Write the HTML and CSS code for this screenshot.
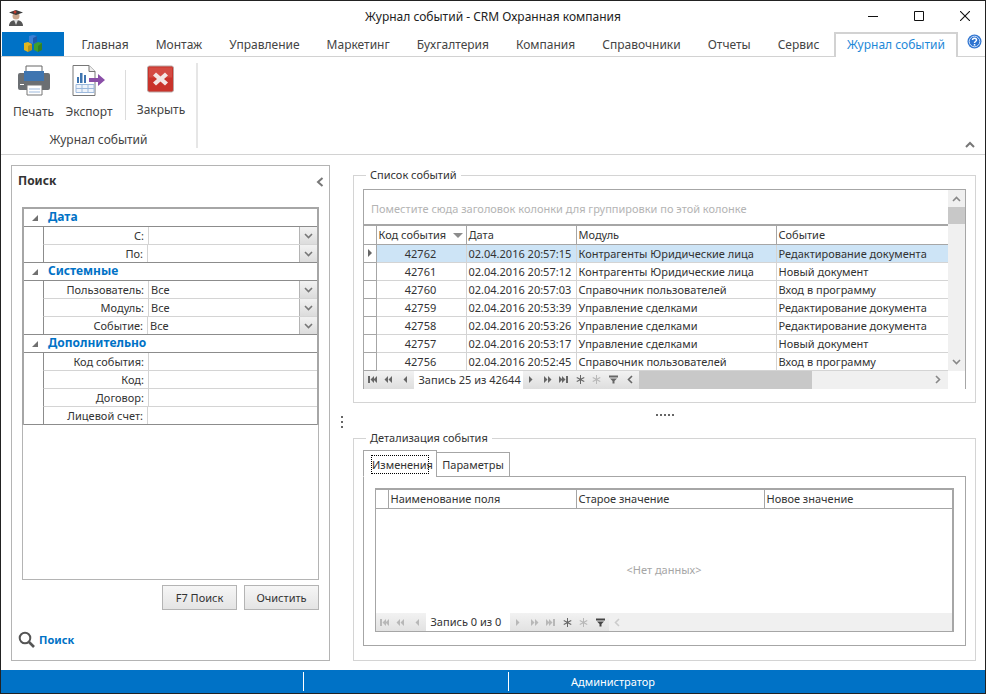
FILE: index.html
```html
<!DOCTYPE html>
<html>
<head>
<meta charset="utf-8">
<title>Журнал событий - CRM Охранная компания</title>
<link rel="stylesheet" href="styles.css">
</head>
<body>
<svg class="defs" width="0" height="0">
  <symbol id="nav-first" viewBox="0 0 9 7"><path d="M0 0h2v7H0zM6 0v7L2.500 3.500zM9 0v7L5.500 3.500z"/></symbol>
  <symbol id="nav-pageprev" viewBox="0 0 9 7"><path d="M4 0v7L.5 3.500zM8 0v7L4.500 3.500z"/></symbol>
  <symbol id="nav-prev" viewBox="0 0 9 7"><path d="M6 0v7L2.500 3.500z"/></symbol>
  <symbol id="nav-next" viewBox="0 0 9 7"><path d="M3 0v7l3.500-3.500z"/></symbol>
  <symbol id="nav-pagenext" viewBox="0 0 9 7"><path d="M1 0v7l3.500-3.500zM5 0v7l3.500-3.500z"/></symbol>
  <symbol id="nav-last" viewBox="0 0 9 7"><path d="M0 0v7l3.500-3.500zM3 0v7l3.500-3.500zM7 0h2v7H7z"/></symbol>
  <symbol id="nav-add" viewBox="0 0 9 9"><path d="M4 0h1v3.500L8 2l.5 1L5.500 4.500 8.500 6 8 7 5 5.500V9H4V5.500L1 7 .5 6l3-1.500-3-1.500L1 2l3 1.500z"/></symbol>
  <symbol id="nav-filter" viewBox="0 0 9 8"><path d="M0 0h9v2H0zM1 3h7L5.500 5.500V8h-2V5.500z"/></symbol>
  <symbol id="chev-down" viewBox="0 0 9 6"><path d="M1 1l3.500 3.500L8 1" fill="none" stroke="currentColor" stroke-width="1.600"/></symbol>
</svg>

<div class="window">
  <div class="titlebar">
    <svg class="app-icon" width="16" height="18" viewBox="0 0 16 18">
      <path d="M1 17c0-4 3-6 7-6s7 2 7 6z" fill="#555"/>
      <path d="M6 11h4l-2 5z" fill="#ddd"/>
      <circle cx="8" cy="7" r="3.500" fill="#c9a58c"/>
      <path d="M1 3.500L8 1l7 2.500L8 6z" fill="#3b3b3b"/>
      <circle cx="7" cy="3" r="1.500" fill="#c0392b"/>
    </svg>
    <div class="title-text">Журнал событий - CRM Охранная компания</div>
    <div class="win-btns">
      <svg width="10" height="10" viewBox="0 0 10 10"><path d="M0 5.500h10" stroke="#111"/></svg>
      <svg width="10" height="10" viewBox="0 0 10 10"><path d="M.5.500h9v9h-9z" fill="none" stroke="#111"/></svg>
      <svg width="10" height="10" viewBox="0 0 10 10"><path d="M0 0l10 10M10 0L0 10" stroke="#111" stroke-width="1.100"/></svg>
    </div>
  </div>

  <div class="tabs">
    <div class="app-tab">
      <svg width="20" height="18" viewBox="0 0 20 18">
        <path d="M6 1l4-1 4 1v6l-4 2-4-2z" fill="#3a7fd5"/>
        <path d="M1 8l4-1 4 2v6l-4 2-4-2z" fill="#e2b720"/>
        <path d="M11 9l4-2 4 1v7l-4 2-4-2z" fill="#3f9e2e"/>
        <path d="M10 3v6l4-2V1z" fill="#1f5aa8"/>
        <path d="M5 11v6l4-2V9zM15 11v6l4-2V8z" fill="#00000030"/>
      </svg>
    </div>
    <div class="tab">Главная</div>
    <div class="tab">Монтаж</div>
    <div class="tab">Управление</div>
    <div class="tab">Маркетинг</div>
    <div class="tab">Бухгалтерия</div>
    <div class="tab">Компания</div>
    <div class="tab">Справочники</div>
    <div class="tab">Отчеты</div>
    <div class="tab">Сервис</div>
    <div class="tab active">Журнал событий</div>
    <svg class="help" width="15" height="15" viewBox="0 0 15 15">
      <circle cx="7.500" cy="7.500" r="7" fill="#2f74d0"/>
      <circle cx="7.500" cy="7.500" r="5.300" fill="none" stroke="#cfe2fa"/>
      <path d="M5.500 6c0-2.500 4-2.500 4 0 0 1.500-2 1.500-2 3" fill="none" stroke="#fff" stroke-width="1.500"/>
      <path d="M6.800 10h1.500v1.500H6.800z" fill="#fff"/>
    </svg>
  </div>

  <div class="ribbon">
    <div class="rgroup">
      <div class="rbuttons">
        <div class="rbtn print">
          <svg width="34" height="31" viewBox="0 0 34 31">
            <path d="M9 1h16v9H9z" fill="#fff" stroke="#666"/>
            <path d="M3 8h28a2 2 0 0 1 2 2v13a2 2 0 0 1-2 2H3a2 2 0 0 1-2-2V10a2 2 0 0 1 2-2z" fill="#6b6f73"/>
            <path d="M7 6h20v10H7z" fill="#3f75b0"/>
            <path d="M3 19h4v1H3z" fill="#fff"/>
            <path d="M10 20h15v10H10z" fill="#fff" stroke="#777"/>
            <path d="M12 24h11M12 27h11" stroke="#9db9dc"/>
          </svg>
          <span>Печать</span>
        </div>
        <div class="rbtn export">
          <svg width="34" height="31" viewBox="0 0 34 31">
            <path d="M1 .500h16l6 6v24H1z" fill="#fff" stroke="#777"/>
            <path d="M17 .500v6h6" fill="#eee" stroke="#777"/>
            <path d="M5 12h2v6H5zM8 8h2.500v10H8zM12 10h2v8h-2z" fill="#3f75b0"/>
            <path d="M4 19.500h18v8H4zM4 23.500h18M10 19.500v8M16 19.500v8" fill="#eef3fa" stroke="#9db9dc"/>
            <path d="M17 13h9V9l7 6-7 6v-4h-9z" fill="#8a4fa8"/>
          </svg>
          <span>Экспорт</span>
        </div>
        <div class="rsep"></div>
        <div class="rbtn close">
          <svg width="28" height="29" viewBox="0 0 28 28">
            <rect x=".5" y=".5" width="26" height="26" rx="2" fill="#c9332b" stroke="#b9a7a5"/>
            <path d="M2 2h23v10H2z" fill="#e0625a" opacity=".5"/>
            <path d="M9 7l4.500 4L18 7l3 3-4 3.500 4 3.500-3 3-4.500-4L9 20l-3-3 4-3.500L6 10z" fill="#f3e6e4"/>
          </svg>
          <span>Закрыть</span>
        </div>
      </div>
      <div class="rgroup-name">Журнал событий</div>
    </div>
    <svg class="collapse" width="10" height="7" viewBox="0 0 10 7"><path d="M1 6l4-4 4 4" fill="none" stroke="#777" stroke-width="2"/></svg>
  </div>

  <div class="main">
    <div class="search-panel">
      <div class="search-head">
        <span>Поиск</span>
        <svg width="8" height="10" viewBox="0 0 8 10"><path d="M6.500 1L2 5l4.500 4" fill="none" stroke="#777" stroke-width="2"/></svg>
      </div>
      <div class="pg">
        <div class="pg-list">
          <div class="pg-cat"><i></i>Дата</div>
          <div class="pg-row"><label>С:</label><div class="pg-val"></div><div class="pg-drop"><svg width="9" height="6"><use href="#chev-down"/></svg></div></div>
          <div class="pg-row last"><label>По:</label><div class="pg-val"></div><div class="pg-drop"><svg width="9" height="6"><use href="#chev-down"/></svg></div></div>
          <div class="pg-cat"><i></i>Системные</div>
          <div class="pg-row"><label>Пользователь:</label><div class="pg-val">Все</div><div class="pg-drop"><svg width="9" height="6"><use href="#chev-down"/></svg></div></div>
          <div class="pg-row"><label>Модуль:</label><div class="pg-val">Все</div><div class="pg-drop"><svg width="9" height="6"><use href="#chev-down"/></svg></div></div>
          <div class="pg-row last"><label>Событие:</label><div class="pg-val">Все</div><div class="pg-drop"><svg width="9" height="6"><use href="#chev-down"/></svg></div></div>
          <div class="pg-cat"><i></i>Дополнительно</div>
          <div class="pg-row"><label>Код события:</label><div class="pg-val"></div></div>
          <div class="pg-row"><label>Код:</label><div class="pg-val"></div></div>
          <div class="pg-row"><label>Договор:</label><div class="pg-val"></div></div>
          <div class="pg-row last"><label>Лицевой счет:</label><div class="pg-val"></div></div>
        </div>
      </div>
      <div class="search-btns">
        <button>F7 Поиск</button>
        <button>Очистить</button>
      </div>
      <div class="search-link">
        <svg width="17" height="17" viewBox="0 0 17 17">
          <circle cx="7" cy="7" r="5.300" fill="none" stroke="#555" stroke-width="2"/>
          <path d="M11 11l5 5" stroke="#555" stroke-width="2.600"/>
        </svg>
        <span>Поиск</span>
      </div>
    </div>

    <div class="vsplit"><span></span><span></span><span></span></div>

    <div class="right">
      <fieldset class="group list-group">
        <legend>Список событий</legend>
        <div class="grid events">
          <div class="grid-body">
            <div class="group-hint">Поместите сюда заголовок колонки для группировки по этой колонке</div>
            <table>
              <colgroup><col class="c-ind"><col class="c-code"><col class="c-date"><col class="c-mod"><col></colgroup>
              <tr class="head"><th></th><th class="sort">Код события<i></i></th><th>Дата</th><th>Модуль</th><th>Событие</th></tr>
              <tr class="sel"><td class="ind"><i></i></td><td class="num">42762</td><td>02.04.2016 20:57:15</td><td>Контрагенты Юридические лица</td><td>Редактирование документа</td></tr>
              <tr><td class="ind"></td><td class="num">42761</td><td>02.04.2016 20:57:12</td><td>Контрагенты Юридические лица</td><td>Новый документ</td></tr>
              <tr><td class="ind"></td><td class="num">42760</td><td>02.04.2016 20:57:03</td><td>Справочник пользователей</td><td>Вход в программу</td></tr>
              <tr><td class="ind"></td><td class="num">42759</td><td>02.04.2016 20:53:39</td><td>Управление сделками</td><td>Редактирование документа</td></tr>
              <tr><td class="ind"></td><td class="num">42758</td><td>02.04.2016 20:53:26</td><td>Управление сделками</td><td>Редактирование документа</td></tr>
              <tr><td class="ind"></td><td class="num">42757</td><td>02.04.2016 20:53:17</td><td>Управление сделками</td><td>Новый документ</td></tr>
              <tr><td class="ind"></td><td class="num">42756</td><td>02.04.2016 20:52:45</td><td>Справочник пользователей</td><td>Вход в программу</td></tr>
            </table>
          </div>
          <div class="vscroll">
            <div class="sb-arrow"><svg width="9" height="6" viewBox="0 0 9 6"><path d="M1 5l3.500-3.500L8 5" fill="none" stroke="#888" stroke-width="1.600"/></svg></div>
            <div class="sb-thumb"></div>
            <div class="sb-track"></div>
            <div class="sb-arrow"><svg width="9" height="6"><use href="#chev-down"/></svg></div>
          </div>
          <div class="grid-nav">
            <div class="nav-btn"><svg><use href="#nav-first"/></svg></div>
            <div class="nav-btn"><svg><use href="#nav-pageprev"/></svg></div>
            <div class="nav-btn"><svg><use href="#nav-prev"/></svg></div>
            <div class="nav-text">Запись 25 из 42644</div>
            <div class="nav-btn"><svg><use href="#nav-next"/></svg></div>
            <div class="nav-btn"><svg><use href="#nav-pagenext"/></svg></div>
            <div class="nav-btn"><svg><use href="#nav-last"/></svg></div>
            <div class="nav-btn"><svg><use href="#nav-add"/></svg></div>
            <div class="nav-btn dim"><svg><use href="#nav-add"/></svg></div>
            <div class="nav-btn"><svg><use href="#nav-filter"/></svg></div>
            <div class="nav-left"><svg width="6" height="9" viewBox="0 0 6 9"><path d="M5 1L1.500 4.500 5 8" fill="none" stroke="#666" stroke-width="1.600"/></svg></div>
            <div class="hthumb"></div>
            <div class="htrack"><svg width="6" height="9" viewBox="0 0 6 9"><path d="M1 1l3.500 3.500L1 8" fill="none" stroke="#888" stroke-width="1.600"/></svg></div>
          </div>
          <div class="corner"></div>
        </div>
      </fieldset>

      <div class="hsplit"><span></span><span></span><span></span><span></span><span></span></div>

      <fieldset class="group detail-group">
        <legend>Детализация события</legend>
        <div class="dtabs">
          <div class="dtab active"><span>Изменения</span></div>
          <div class="dtab">Параметры</div>
        </div>
        <div class="dpage">
          <div class="grid changes">
            <table>
              <colgroup><col class="c-ind"><col class="c-f"><col class="c-f"><col></colgroup>
              <tr class="head"><th></th><th>Наименование поля</th><th>Старое значение</th><th>Новое значение</th></tr>
            </table>
            <div class="empty">&lt;Нет данных&gt;</div>
            <div class="grid-nav off">
              <div class="nav-btn"><svg><use href="#nav-first"/></svg></div>
              <div class="nav-btn"><svg><use href="#nav-pageprev"/></svg></div>
              <div class="nav-btn"><svg><use href="#nav-prev"/></svg></div>
              <div class="nav-text small">Запись 0 из 0</div>
              <div class="nav-btn"><svg><use href="#nav-next"/></svg></div>
              <div class="nav-btn"><svg><use href="#nav-pagenext"/></svg></div>
              <div class="nav-btn"><svg><use href="#nav-last"/></svg></div>
              <div class="nav-btn on"><svg><use href="#nav-add"/></svg></div>
              <div class="nav-btn dim"><svg><use href="#nav-add"/></svg></div>
              <div class="nav-btn on dark"><svg><use href="#nav-filter"/></svg></div>
              <div class="nav-left flat"><svg width="6" height="9" viewBox="0 0 6 9"><path d="M5 1L1.500 4.500 5 8" fill="none" stroke="#ccc" stroke-width="1.600"/></svg></div>
              <div class="htrack"></div>
            </div>
          </div>
        </div>
      </fieldset>
    </div>
  </div>

  <div class="statusbar">
    <div class="st-cell first"></div>
    <div class="st-cell second"></div>
    <div class="st-cell user">Администратор</div>
  </div>
</div>
</body>
</html>
```

FILE: styles.css
```css
* {
  box-sizing: border-box;
}

html, body {
  margin: 0;
  height: 100%;
  overflow: hidden;
}

body {
  font-family: "Noto Sans", "Open Sans", sans-serif;
  font-size: 11px;
  color: #333;
  background: #fff;
}

.defs {
  position: absolute;
}

.window {
  width: 986px;
  height: 694px;
  border: 1px solid #222;
  display: flex;
  flex-direction: column;
  background: #fff;
}

/* Title bar */
.titlebar {
  height: 31px;
  flex: none;
  display: flex;
  align-items: center;
  position: relative;
}

.app-icon {
  margin-left: 7px;
  margin-top: 2px;
}

.title-text {
  position: absolute;
  left: 0;
  right: 0;
  top: 7px;
  text-align: center;
  font-size: 12px;
  color: #222;
}

.win-btns {
  margin-left: auto;
  display: flex;
  gap: 36px;
  padding-right: 15px;
  margin-top: -2px;
}

/* Ribbon tabs */
.tabs {
  height: 25px;
  flex: none;
  display: flex;
  border-bottom: 1px solid #d2d2d2;
  padding-left: 1px;
  position: relative;
}

.app-tab {
  width: 62px;
  height: 24px;
  background: #0072c6;
  display: flex;
  align-items: center;
  justify-content: center;
  margin-right: 4px;
}

.tab {
  padding: 4px 13.500px 0;
  font-size: 12px;
  color: #444;
  white-space: nowrap;
}

.tab.active {
  color: #1e88d8;
  background: #fff;
  border: 2px solid #d2d2d2;
  border-bottom: none;
  height: 25px;
  padding: 2px 11px 0;
  margin-left: 1px;
}

.help {
  position: absolute;
  right: 3px;
  top: 2px;
}

/* Ribbon content */
.ribbon {
  height: 98px;
  flex: none;
  display: flex;
  border-bottom: 1px solid #d2d2d2;
  position: relative;
}

.rgroup {
  width: 197px;
  margin: 6px 0 6px;
  border-right: 2px solid #e6e6e6;
  display: flex;
  flex-direction: column;
}

.rbuttons {
  display: flex;
  height: 69px;
  padding-left: 9px;
}

.rbtn {
  display: flex;
  flex-direction: column;
  align-items: center;
  font-size: 12px;
  color: #444;
}

.rbtn span {
  margin-top: 7px;
}

.rbtn svg {
  margin-top: 2px;
}

.print {
  width: 47px;
}

.export {
  width: 56px;
  margin-left: 4px;
}

.close {
  width: 46px;
  margin-left: 12px;
}

.rsep {
  width: 1px;
  height: 50px;
  margin: 7px 0 0 8px;
  background: #dcdcdc;
}

.rgroup-name {
  text-align: center;
  font-size: 12px;
  color: #444;
  margin-top: 3px;
}

.collapse {
  position: absolute;
  right: 10px;
  bottom: 6px;
}

/* Main area */
.main {
  flex: 1;
  display: flex;
  padding: 10px 9px 9px 10px;
  min-height: 0;
}

.search-panel {
  width: 319px;
  flex: none;
  border: 1px solid #b4b4b4;
  display: flex;
  flex-direction: column;
  padding: 0 10px;
}

.search-head {
  height: 41px;
  flex: none;
  margin: 0 -5px 0 -4px;
  display: flex;
  justify-content: space-between;
  align-items: flex-start;
  padding-top: 6px;
  font-size: 12px;
  font-weight: 700;
  color: #333;
}

.search-head svg {
  margin-top: 5px;
}

.pg {
  flex: 1;
  border: 1px solid #b4b4b4;
  border-top: none;
}

.pg-list {
  border: 2px solid #a6a6a6;
  margin: 0 -1px;
  border-bottom: none;
}

.pg-cat {
  height: 18px;
  border-bottom: 1px solid #8c8c8c;
  padding-left: 24px;
  line-height: 16px;
  font-size: 12px;
  font-weight: 700;
  color: #0072c6;
  position: relative;
}

.pg-cat i {
  position: absolute;
  left: 8px;
  top: 6px;
  border-style: solid;
  border-width: 0 0 6px 6px;
  border-color: transparent transparent #707070 transparent;
}

.pg-row {
  height: 18px;
  margin-left: 19px;
  border-left: 1px solid #8c8c8c;
  border-bottom: 1px solid #d4d4d4;
  display: grid;
  grid-template-columns: 105px 1fr auto;
  line-height: 17px;
}

.pg-row.last {
  margin-left: 0;
  padding-left: 19px;
  border-left: none;
  border-bottom-color: #8c8c8c;
  background: linear-gradient(#8c8c8c, #8c8c8c) 19px 0 / 1px 100% no-repeat;
}

.pg-row label {
  text-align: right;
  padding-right: 4px;
  border-right: 1px solid #d4d4d4;
}

.pg-val {
  padding-left: 2px;
}

.pg-drop {
  width: 18px;
  height: 17px;
  border-left: 1px solid #b4b4b4;
  background: linear-gradient(#f2f2f2, #dcdcdc);
  color: #777;
  display: flex;
  align-items: center;
  justify-content: center;
}

.search-btns {
  flex: none;
  display: flex;
  justify-content: flex-end;
  gap: 7px;
  margin-top: 5px;
}

.search-btns button {
  width: 75px;
  height: 25px;
  border: 1px solid #b4b4b4;
  background: linear-gradient(#f6f6f6, #e4e4e4);
  font: 11px "Noto Sans", sans-serif;
  color: #333;
  padding: 0;
}

.search-link {
  height: 50px;
  flex: none;
  margin-left: -4px;
  display: flex;
  align-items: flex-start;
  gap: 4px;
  padding-top: 21px;
  font-weight: 700;
  color: #0072c6;
}

.search-link span {
  margin-top: 1px;
}

.vsplit {
  width: 23px;
  flex: none;
  display: flex;
  flex-direction: column;
  align-items: center;
  gap: 3px;
  padding-top: 251px;
}

.vsplit span {
  width: 2px;
  height: 2px;
  background: #666;
}

.right {
  flex: 1;
  padding-top: 3px;
  display: flex;
  flex-direction: column;
  min-width: 0;
}

fieldset.group {
  margin: 0;
  min-width: 0;
  border: 1px solid #d4d4d4;
  padding: 7px 9px 0;
}

.group legend {
  margin-left: 3px;
  padding: 0 4px;
  line-height: 14px;
  font-size: 11px;
  color: #333;
}

.list-group {
  height: 235px;
}

.detail-group {
  height: 230px;
}

.hsplit {
  height: 28px;
  flex: none;
  display: flex;
  justify-content: center;
  gap: 2px;
  padding-top: 11px;
}

.hsplit span {
  width: 2px;
  height: 2px;
  background: #666;
}

/* Grids */
.grid {
  border: 1px solid #a6a6a6;
  background: #fff;
}

.events {
  height: 200px;
  display: grid;
  grid-template-columns: 1fr 17px;
  grid-template-rows: 1fr 18px;
}

.group-hint {
  height: 36px;
  border-bottom: 2px solid #a6a6a6;
  padding: 11px 0 0 7px;
  color: #b4b4b4;
}

table {
  width: 100%;
  table-layout: fixed;
  border-collapse: collapse;
}

th, td {
  height: 18px;
  padding: 0 2px;
  font-weight: 400;
  text-align: left;
  white-space: nowrap;
  overflow: hidden;
  border-right: 1px solid #d4d4d4;
  border-bottom: 1px solid #d4d4d4;
  color: #333;
}

th {
  border-right-color: #a6a6a6;
  border-bottom-color: #a6a6a6;
}

th:last-child, td:last-child {
  border-right: none;
}

.c-ind {
  width: 12px;
}

.c-code {
  width: 90px;
}

.c-date {
  width: 110px;
}

.c-mod {
  width: 200px;
}

.c-f {
  width: 188px;
}

td.num {
  text-align: center;
  padding-right: 3px;
}

td.ind {
  padding: 0;
  border-right-color: #a6a6a6;
  border-bottom-color: #a6a6a6;
}

td.ind i {
  display: block;
  margin-left: 4px;
  width: 0;
  border-style: solid;
  border-width: 4px 0 4px 4px;
  border-color: transparent transparent transparent #666;
}

tr.sel td {
  background: #cde4f6;
}

tr.sel td.ind {
  background: #fff;
}

th.sort i {
  display: inline-block;
  margin-left: 7px;
  vertical-align: 1px;
  border-style: solid;
  border-width: 5px 5px 0;
  border-color: #8c8c8c transparent transparent;
}

.vscroll {
  background: #f0f0f0;
  display: flex;
  flex-direction: column;
}

.sb-arrow {
  height: 17px;
  flex: none;
  color: #888;
  display: flex;
  align-items: center;
  justify-content: center;
}

.sb-thumb {
  height: 17px;
  flex: none;
  background: #c8c8c8;
}

.sb-track {
  flex: 1;
}

.grid-nav {
  display: flex;
  height: 18px;
  background: linear-gradient(#f2f2f2, #dedede);
  color: #666;
}

.nav-btn {
  width: 16.500px;
  display: flex;
  align-items: center;
  justify-content: center;
}

.nav-btn svg {
  width: 9px;
  height: 9px;
  fill: currentColor;
}

.nav-btn.dim {
  color: #b8b8b8;
}

.nav-text {
  width: 109px;
  background: #fff;
  color: #333;
  padding-left: 5px;
  line-height: 18px;
}

.nav-text.small {
  width: 84px;
}

.nav-left {
  width: 17px;
  display: flex;
  align-items: center;
  justify-content: center;
}

.hthumb {
  width: 173px;
  background: #c8c8c8;
}

.htrack {
  flex: 1;
  background: #f0f0f0;
  display: flex;
  align-items: center;
  justify-content: flex-end;
  padding-right: 7px;
}

.corner {
  background: #fff;
}

/* Detail tabs */
.dtabs {
  display: flex;
  align-items: flex-end;
  height: 26px;
  margin-top: -1px;
  position: relative;
  z-index: 1;
  margin-bottom: -1px;
}

.dtab {
  width: 74px;
  height: 25px;
  border: 1px solid #a6a6a6;
  text-align: center;
  line-height: 24px;
  background: #fff;
}

.dtab.active {
  height: 27px;
  border-bottom-color: #fff;
  padding-top: 4px;
  line-height: 17px;
  margin-right: -1px;
}

.dtab.active span {
  display: block;
  width: 58px;
  margin: 0 auto;
  border: 1px dotted #000;
}

.dpage {
  height: 170px;
  border: 1px solid #a6a6a6;
  padding: 11px 11px 0;
}

.changes {
  height: 144px;
  border-width: 2px 2px 1px 1px;
  display: flex;
  flex-direction: column;
}

.empty {
  flex: 1;
  display: flex;
  align-items: center;
  justify-content: center;
  color: #a6a6a6;
  padding-top: 17px;
}

.grid-nav.off {
  color: #b8b8b8;
  background: linear-gradient(#f2f2f2, #e2e2e2);
}

.grid-nav.off .on {
  color: #666;
}

.grid-nav.off .dark {
  color: #444;
}

.nav-left.flat {
  background: #f0f0f0;
}

/* Status bar */
.statusbar {
  height: 23px;
  flex: none;
  background: #0072c6;
  color: #fff;
  display: flex;
  padding: 2px 0;
}

.st-cell {
  border-right: 1px solid #fff;
}

.st-cell.first {
  width: 303px;
}

.st-cell.second {
  width: 205px;
}

.st-cell.user {
  border: none;
  padding-left: 62px;
  line-height: 19px;
}
```
